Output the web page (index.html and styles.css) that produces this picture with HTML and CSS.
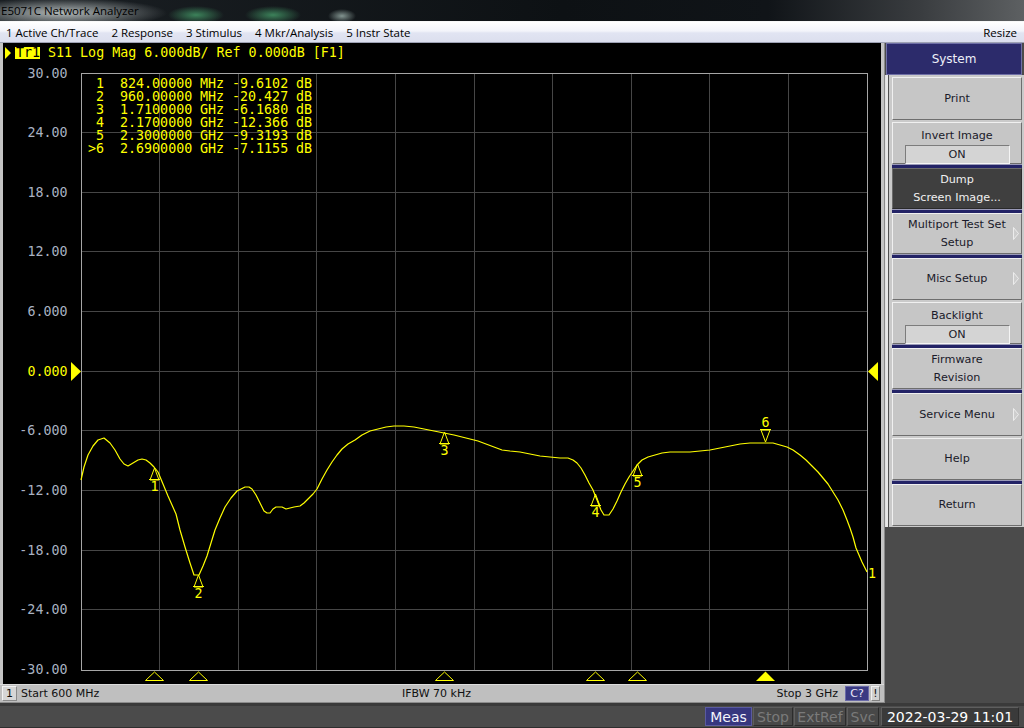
FILE: index.html
```html
<!DOCTYPE html>
<html>
<head>
<meta charset="utf-8">
<title>E5071C Network Analyzer</title>
<link rel="stylesheet" href="styles.css">
</head>
<body>
<div class="titlebar"><span class="title">E5071C Network Analyzer</span></div>
<div class="menubar">
  <div class="menu-items">
    <span>1 Active Ch/Trace</span>
    <span>2 Response</span>
    <span>3 Stimulus</span>
    <span>4 Mkr/Analysis</span>
    <span>5 Instr State</span>
  </div>
  <span class="resize">Resize</span>
</div>
<div class="main">
  <div class="left">
    <div class="chart">
      <svg class="plot" width="878" height="641" viewBox="3 43 878 641" xmlns="http://www.w3.org/2000/svg">
        <!-- trace header -->
        <polygon class="yfill" points="5,47 11,53 5,59"/>
        <rect class="yfill" x="15" y="47" width="25" height="12"/>
        <text class="mono tr" x="16" y="57">Tr1</text>
        <text class="mono yt" x="48" y="57">S11 Log Mag 6.000dB/ Ref 0.000dB [F1]</text>

        <!-- grid -->
        <g class="grid">
          <line x1="159.5" y1="73" x2="159.5" y2="670"/>
          <line x1="238.5" y1="73" x2="238.5" y2="670"/>
          <line x1="316.5" y1="73" x2="316.5" y2="670"/>
          <line x1="395.5" y1="73" x2="395.5" y2="670"/>
          <line x1="474.5" y1="73" x2="474.5" y2="670"/>
          <line x1="552.5" y1="73" x2="552.5" y2="670"/>
          <line x1="631.5" y1="73" x2="631.5" y2="670"/>
          <line x1="709.5" y1="73" x2="709.5" y2="670"/>
          <line x1="788.5" y1="73" x2="788.5" y2="670"/>
          <line x1="81" y1="132.5" x2="867" y2="132.5"/>
          <line x1="81" y1="192.5" x2="867" y2="192.5"/>
          <line x1="81" y1="251.5" x2="867" y2="251.5"/>
          <line x1="81" y1="311.5" x2="867" y2="311.5"/>
          <line x1="81" y1="371.5" x2="867" y2="371.5"/>
          <line x1="81" y1="430.5" x2="867" y2="430.5"/>
          <line x1="81" y1="490.5" x2="867" y2="490.5"/>
          <line x1="81" y1="550.5" x2="867" y2="550.5"/>
          <line x1="81" y1="609.5" x2="867" y2="609.5"/>
        </g>
        <rect class="frame" x="81.5" y="73.5" width="786" height="597"/>

        <!-- axis labels -->
        <g class="mono axis">
          <text x="67.5" y="78">30.00</text>
          <text x="67.5" y="137">24.00</text>
          <text x="67.5" y="197">18.00</text>
          <text x="67.5" y="256">12.00</text>
          <text x="67.5" y="316">6.000</text>
          <text x="67.5" y="376" class="ref">0.000</text>
          <text x="67.5" y="435">-6.000</text>
          <text x="67.5" y="495">-12.00</text>
          <text x="67.5" y="555">-18.00</text>
          <text x="67.5" y="614">-24.00</text>
          <text x="67.5" y="674">-30.00</text>
        </g>
        <polygon class="yfill" points="71,362 81,371.5 71,381"/>
        <polygon class="yfill" points="878,362 868,371.5 878,381"/>

        <!-- marker table -->
        <g class="mono yt">
          <text y="88"><tspan x="96">1</tspan><tspan x="120">824.00000</tspan><tspan x="200">MHz</tspan><tspan x="232">-9.6102</tspan><tspan x="296">dB</tspan></text>
          <text y="101"><tspan x="96">2</tspan><tspan x="120">960.00000</tspan><tspan x="200">MHz</tspan><tspan x="232">-20.427</tspan><tspan x="296">dB</tspan></text>
          <text y="114"><tspan x="96">3</tspan><tspan x="120">1.7100000</tspan><tspan x="200">GHz</tspan><tspan x="232">-6.1680</tspan><tspan x="296">dB</tspan></text>
          <text y="127"><tspan x="96">4</tspan><tspan x="120">2.1700000</tspan><tspan x="200">GHz</tspan><tspan x="232">-12.366</tspan><tspan x="296">dB</tspan></text>
          <text y="140"><tspan x="96">5</tspan><tspan x="120">2.3000000</tspan><tspan x="200">GHz</tspan><tspan x="232">-9.3193</tspan><tspan x="296">dB</tspan></text>
          <text y="153"><tspan x="88">&gt;6</tspan><tspan x="120">2.6900000</tspan><tspan x="200">GHz</tspan><tspan x="232">-7.1155</tspan><tspan x="296">dB</tspan></text>
        </g>

        <!-- trace -->
        <polyline class="trace" points="81,480 84,467 88,455 93,446 98,440 104,438 110,443 115,450 120,459 124,464 128,466 133,463 138,460 142,459 146,460 150,463 154,467 158,472 163,484 168,496 172,505 176,514 180,530 185,547 190,563 194,575 199,575 203,566 207,556 211,543 215,530 220,518 225,507 231,498 237,491 241,489 245,487 249,487 252,489 256,495 260,503 264,511 267,513 270,513 273,509 276,507 282,507 286,509 290,508 294,507 300,506 304,503 308,499 313,494 317,489 322,479 327,470 332,462 337,455 342,449 348,444 355,440 362,435 370,431 378,429 386,427 394,426 404,426 414,427 424,429 434,431 444,433 454,435 462,437 470,439 478,441 486,444 494,447 502,450 510,451 520,452 530,454 540,456 550,457 560,458 568,458 573,460 577,463 581,468 585,475 589,483 593,490 597,500 601,510 604,515 609,515 613,509 617,501 621,492 625,484 629,477 633,471 637,465 642,460 648,457 655,455 662,453 670,452 680,452 690,452 700,451 710,450 720,448 730,446 740,444 750,443 760,443 773,443 780,445 787,447 793,450 800,455 806,460 812,466 818,472 823,478 828,484 833,492 838,500 843,510 847,520 850,528 853,537 856,548 859,555 862,562 865,568 867,572"/>
        <text class="mono yt" x="868" y="578">1</text>

        <!-- markers on trace -->
        <g class="mk">
          <polygon points="154.5,468 150,480 159,480"/>
          <line x1="149" y1="479.5" x2="160" y2="479.5"/>
          <polygon points="198.5,575 194,587 203,587"/>
          <line x1="193" y1="586.5" x2="204" y2="586.5"/>
          <polygon points="444.5,432 440,444 449,444"/>
          <line x1="439" y1="443.5" x2="450" y2="443.5"/>
          <polygon points="595.5,494 591,506 600,506"/>
          <line x1="590" y1="505.5" x2="601" y2="505.5"/>
          <polygon points="637.5,464 633,476 642,476"/>
          <line x1="632" y1="475.5" x2="643" y2="475.5"/>
          <polygon points="765.5,442 761,430 770,430"/>
          <line x1="760" y1="429.5" x2="771" y2="429.5"/>
        </g>
        <g class="mono yt mklabel">
          <text x="154.5" y="491">1</text>
          <text x="198.5" y="598">2</text>
          <text x="444.5" y="455">3</text>
          <text x="595.5" y="517">4</text>
          <text x="637.5" y="487">5</text>
          <text x="765.5" y="427">6</text>
        </g>

        <!-- markers on x axis -->
        <g class="mk">
          <polygon points="154.5,672 145.5,680.5 163.5,680.5"/>
          <polygon points="198.5,672 189.5,680.5 207.5,680.5"/>
          <polygon points="444.5,672 435.5,680.5 453.5,680.5"/>
          <polygon points="595.5,672 586.5,680.5 604.5,680.5"/>
          <polygon points="637.5,672 628.5,680.5 646.5,680.5"/>
        </g>
        <polygon class="yfill" points="765.5,671.5 756,681 775,681"/>
      </svg>
    </div>
    <div class="statusbar">
      <div class="st-left"><span class="chbox">1</span><span>Start 600 MHz</span></div>
      <div class="st-mid">IFBW 70 kHz</div>
      <div class="st-right"><span>Stop 3 GHz</span><span class="cbox">C?</span><span class="exbox">!</span></div>
    </div>
  </div>
  <div class="side">
    <div class="side-header">System</div>
    <div class="keys">
      <div class="key k43">Print</div>
      <div class="gap"></div>
      <div class="key k42 with-box"><span>Invert Image</span><span class="onbox">ON</span></div>
      <div class="sep"></div>
      <div class="key k41 dark two"><span>Dump</span><span>Screen Image...</span></div>
      <div class="sep"></div>
      <div class="key k41 two"><span>Multiport Test Set</span><span>Setup</span><svg class="arrow" width="6" height="13" viewBox="0 0 6 13"><polygon points="0.5,0.5 5.5,6.5 0.5,12.5" /></svg></div>
      <div class="sep"></div>
      <div class="key k42">Misc Setup<svg class="arrow" width="6" height="13" viewBox="0 0 6 13"><polygon points="0.5,0.5 5.5,6.5 0.5,12.5" /></svg></div>
      <div class="gap"></div>
      <div class="key k42 with-box"><span>Backlight</span><span class="onbox">ON</span></div>
      <div class="sep"></div>
      <div class="key k41 two"><span>Firmware</span><span>Revision</span></div>
      <div class="sep"></div>
      <div class="key k43">Service Menu<svg class="arrow" width="6" height="13" viewBox="0 0 6 13"><polygon points="0.5,0.5 5.5,6.5 0.5,12.5" /></svg></div>
      <div class="gap"></div>
      <div class="key k42">Help</div>
      <div class="sep"></div>
      <div class="key k42">Return</div>
    </div>
    <div class="side-fill"></div>
  </div>
</div>
<div class="bottombar">
  <span class="bb meas">Meas</span>
  <span class="bb off w40">Stop</span>
  <span class="bb off w52">ExtRef</span>
  <span class="bb off w31">Svc</span>
  <span class="bb date">2022-03-29 11:01</span>
</div>
</body>
</html>
```
FILE: styles.css
```css
* { box-sizing: border-box; }
html, body { margin: 0; padding: 0; }
body {
  width: 1024px;
  height: 728px;
  overflow: hidden;
  background: #4a4a4a;
  font-family: "DejaVu Sans", sans-serif;
}

/* title bar */
.titlebar {
  height: 21px;
  display: flex;
  align-items: center;
  padding-left: 1px;
  font-family: "Open Sans", "DejaVu Sans", sans-serif;
  font-size: 11.5px;
  color: #000;
  background:
    radial-gradient(ellipse 105px 15px at 62px 13px, rgba(185,192,192,0.95), rgba(185,192,192,0) 100%),
    radial-gradient(ellipse 28px 9px at 196px 15px, rgba(60,130,90,1), rgba(60,130,90,0) 100%),
    radial-gradient(ellipse 28px 9px at 273px 15px, rgba(60,130,90,1), rgba(60,130,90,0) 100%),
    radial-gradient(ellipse 14px 7px at 342px 16px, rgba(150,170,165,0.85), rgba(150,170,165,0) 100%),
    linear-gradient(to right, #1b2024 0%, #0d1114 55%, #101418 75%, #3a3d40 90%, #5d6062 100%);
}
.title { line-height: 21px; }

/* menu bar */
.menubar {
  height: 22px;
  display: flex;
  align-items: center;
  justify-content: space-between;
  padding: 0 7px 0 6px;
  font-family: "Open Sans", "DejaVu Sans", sans-serif;
  font-size: 11.5px;
  color: #000;
  background: linear-gradient(#ffffff 0%, #f3f4fa 45%, #e1e4f2 55%, #dcdfee 100%);
  border-top: 1px solid #f8f8f8;
  border-bottom: 1px solid #9ea2b4;
}
.menu-items { display: flex; gap: 13px; }

/* main area */
.main {
  height: 660px;
  display: flex;
}
.left {
  width: 884px;
  display: flex;
  flex-direction: column;
  background: #c4c4c4;
}
.chart {
  height: 641px;
  margin: 0 3px 0 3px;
  background: #000;
}
.plot { display: block; }

.mono {
  font-family: "DejaVu Sans Mono", "Liberation Mono", monospace;
  font-size: 13.33px;
}
.yt { fill: #ffff00; }
.tr { fill: #000; }
.yfill { fill: #ffff00; }
.grid line { stroke: #464646; stroke-width: 1; }
.frame { fill: none; stroke: #a6a6a6; stroke-width: 1; }
.axis text { fill: #a9b2c2; text-anchor: end; }
.axis text.ref { fill: #ffff00; }
.trace { fill: none; stroke: #ffff00; stroke-width: 1.2; stroke-linejoin: round; }
.mk polygon { fill: none; stroke: #ffff00; stroke-width: 1; }
.mk line { stroke: #ffff00; stroke-width: 1; }
.mklabel text { text-anchor: middle; }

/* status bar */
.statusbar {
  height: 19px;
  display: grid;
  grid-template-columns: 402px auto 1fr;
  align-items: center;
  font-size: 11px;
  color: #101010;
  background: #bfbfbf;
  border-top: 1px solid #dcdcdc;
  border-bottom: 1px solid #8c8c8c;
}
.st-left { display: flex; align-items: center; gap: 4px; padding-left: 2px; }
.chbox {
  width: 15px;
  height: 15px;
  display: flex;
  align-items: center;
  justify-content: center;
  background: #d6d6d6;
  border: 1px solid #f2f2f2;
  border-right-color: #8a8a8a;
  border-bottom-color: #8a8a8a;
}
.st-right {
  display: flex;
  align-items: center;
  justify-content: flex-end;
  padding-right: 4px;
}
.cbox {
  margin-left: 7px;
  width: 24px;
  height: 15px;
  display: flex;
  align-items: center;
  justify-content: center;
  background: #3a3a82;
  color: #e8e8f8;
  border: 1px solid #6a6aa8;
}
.exbox {
  margin-left: 2px;
  width: 9px;
  height: 15px;
  display: flex;
  align-items: center;
  justify-content: center;
  background: #d0d0d0;
  border: 1px solid #f0f0f0;
  border-right-color: #808080;
  border-bottom-color: #808080;
}

/* side panel */
.side {
  width: 140px;
  display: flex;
  flex-direction: column;
  background: #4b4b4b;
  border-left: 1px solid #8a8a8a;
}
.side-header {
  height: 32px;
  margin: 0 2px 0 1px;
  display: flex;
  align-items: center;
  justify-content: center;
  background: #2c2b6b;
  border: 1px solid #6f6fa6;
  color: #eef0f8;
  font-size: 12px;
}
.keys {
  display: flex;
  flex-direction: column;
  padding: 2px 2px 1px 6px;
  background: #cacaca;
  border-left: 1px solid #e0e0e0;
  box-shadow: inset 2px 0 0 #e8e8e8, inset 3px 0 0 #505050;
}
.key {
  position: relative;
  display: flex;
  flex-direction: column;
  align-items: center;
  justify-content: center;
  background: #c6c6c6;
  border: 1px solid #f0f0f0;
  border-right-color: #6e6e6e;
  border-bottom-color: #6e6e6e;
  color: #1a1a2a;
  font-size: 11.2px;
  line-height: 18px;
}
.k41 { height: 41px; }
.k42 { height: 42px; }
.k43 { height: 43px; }
.key.dark {
  background: #3f3f3f;
  color: #f0f0f0;
  border-color: #6a6a6a #2a2a2a #2a2a2a #6a6a6a;
}
.with-box { justify-content: flex-start; padding-top: 4px; line-height: 17px; }
.onbox {
  width: 105px;
  height: 19px;
  margin-top: 1px;
  display: flex;
  align-items: center;
  justify-content: center;
  background: #d4d4d4;
  border: 1px solid #7c7c7c;
  border-right-color: #f4f4f4;
  border-bottom-color: #f4f4f4;
  line-height: 17px;
}
.arrow {
  position: absolute;
  right: 2px;
  top: 50%;
  margin-top: -7px;
}
.arrow polygon { fill: #cdcdcd; stroke: #ececec; stroke-width: 1; }
.gap { height: 2px; }
.sep {
  height: 4px;
  background: #232366;
  border-top: 1px solid #9a9ab8;
}
.side-fill { flex: 1; background: #4b4b4b; }

/* bottom bar */
.bottombar {
  height: 25px;
  display: flex;
  align-items: center;
  justify-content: flex-end;
  gap: 1px;
  padding-right: 5px;
  background: #4b4b4b;
  border-top: 3px solid #3a3a3a;
  border-bottom: 1px solid #2e2e2e;
  font-size: 14px;
}
.bb {
  height: 19px;
  display: flex;
  align-items: center;
  justify-content: center;
  border: 1px solid #5e5e5e;
  border-right-color: #2c2c2c;
  border-bottom-color: #2c2c2c;
}
.meas { width: 47px; background: #37377f; color: #f4f4fc; border-color: #5a5aa0; }
.off { color: #7a7a7a; background: #484848; }
.w40 { width: 40px; }
.w52 { width: 52px; }
.w31 { width: 32px; }
.date { width: 138px; color: #ffffff; background: #3a3a3a; margin-left: 1px; }
```
